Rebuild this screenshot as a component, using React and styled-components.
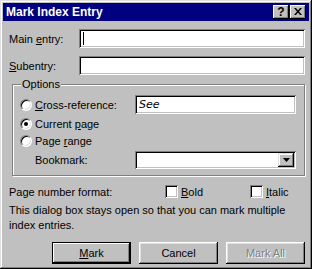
import React from "react";
import styled, { createGlobalStyle, css } from "styled-components";

const Global = createGlobalStyle`
  html, body { margin: 0; padding: 0; background: #c0c0c0; }
  body { font-family: "Liberation Sans", Arial, sans-serif; font-size: 11px; color: #000; }
  * { box-sizing: border-box; }
`;

const Window = styled.div`
  width: 312px;
  height: 269px;
  padding: 3px;
  background: #c0c0c0;
  box-shadow: inset -1px -1px #000, inset 1px 1px #dfdfdf, inset -2px -2px #808080, inset 2px 2px #fff;
  display: flex;
  flex-direction: column;
`;

const TitleBar = styled.div`
  height: 18px;
  background: #000080;
  display: flex;
  align-items: center;
  padding: 0 3px 0 3px;
`;

const Title = styled.div`
  flex: 1;
  color: #fff;
  font-weight: bold;
  font-size: 12px;
`;

const CapButtons = styled.div`
  display: flex;
  gap: 1px;
`;

const CapButton = styled.div`
  width: 16px;
  height: 14px;
  background: #c0c0c0;
  box-shadow: inset -1px -1px #000, inset 1px 1px #fff, inset -2px -2px #808080;
  display: flex;
  align-items: center;
  justify-content: center;
  font-weight: bold;
  font-size: 12px;
  line-height: 1;
  padding-bottom: 1px;
`;

const Content = styled.div`
  flex: 1;
  display: flex;
  flex-direction: column;
  padding: 8px 4px 0 6px;
`;

const Row = styled.div`
  display: flex;
  align-items: center;
  height: 19px;
  margin-top: ${(p) => p.$mt || 0}px;
`;

const Label = styled.div`
  width: 70px;
  flex: none;
  white-space: nowrap;
`;

const sunken = css`
  background: #fff;
  box-shadow: inset 1px 1px #808080, inset -1px -1px #fff, inset 2px 2px #000, inset -2px -2px #c0c0c0;
`;

const Input = styled.div`
  ${sunken};
  height: 19px;
  flex: 1;
  display: flex;
  align-items: center;
  padding: 0 4px;
  font-style: ${(p) => (p.$italic ? "italic" : "normal")};
  font-family: ${(p) => (p.$italic ? '"DejaVu Sans", sans-serif' : "inherit")};
`;

const Caret = styled.div`
  width: 1px;
  height: 13px;
  background: #000;
`;

const Group = styled.fieldset`
  margin: 3px 0 0 3px;
  padding: 0 8px 6px 7px;
  border: 1px solid #808080;
  box-shadow: inset 1px 1px #fff, 1px 1px #fff;
  min-width: 0;
`;

const Legend = styled.legend`
  padding: 0 1px;
  margin-left: 1px;
  background: #c0c0c0;
  line-height: 13px;
`;

const OptGrid = styled.div`
  display: grid;
  grid-template-columns: 115px 161px;
  grid-template-rows: 19px 14px 14px 18px;
  row-gap: 3px;
  align-items: center;
  margin-top: 4px;
`;

const Radio = styled.div`
  display: flex;
  align-items: center;
  gap: 3px;
  grid-column: ${(p) => (p.$span ? "1 / 3" : "auto")};
`;

const RadioCircle = styled.span`
  width: 12px;
  height: 12px;
  border-radius: 50%;
  background: #fff;
  border: 1px solid;
  border-color: #808080 #fff #fff #808080;
  box-shadow: inset 1px 1px #000, inset -1px -1px #dfdfdf;
  display: flex;
  align-items: center;
  justify-content: center;
  flex: none;
`;

const Dot = styled.span`
  width: 4px;
  height: 4px;
  border-radius: 50%;
  background: #000;
`;

const Indent = styled.div`
  padding-left: 15px;
`;

const Combo = styled.div`
  ${sunken};
  height: 18px;
  display: flex;
  justify-content: flex-end;
  padding: 2px;
`;

const DropBtn = styled.div`
  width: 16px;
  height: 14px;
  background: #c0c0c0;
  box-shadow: inset -1px -1px #000, inset 1px 1px #dfdfdf, inset -2px -2px #808080, inset 2px 2px #fff;
  display: flex;
  align-items: center;
  justify-content: center;
`;

const CheckRow = styled.div`
  display: grid;
  grid-template-columns: 156px 85px 1fr;
  align-items: center;
  height: 13px;
  margin-top: 9px;
`;

const Check = styled.div`
  display: flex;
  align-items: center;
  gap: 3px;
`;

const Box = styled.span`
  ${sunken};
  width: 13px;
  height: 13px;
  flex: none;
`;

const Info = styled.div`
  margin-top: 5px;
  line-height: 15px;
  padding-right: 10px;
`;

const Buttons = styled.div`
  display: flex;
  justify-content: flex-end;
  gap: 8px;
  margin-top: 9px;
`;

const Button = styled.div`
  width: 79px;
  height: 22px;
  background: #c0c0c0;
  display: flex;
  align-items: center;
  justify-content: center;
  box-shadow: ${(p) =>
    p.$default
      ? "inset 0 0 0 1px #000, inset -2px -2px #000, inset 2px 2px #fff, inset -3px -3px #808080"
      : "inset -1px -1px #000, inset 1px 1px #fff, inset -2px -2px #808080, inset 2px 2px #dfdfdf"};
  color: ${(p) => (p.$disabled ? "#808080" : "#000")};
  text-shadow: ${(p) => (p.$disabled ? "1px 1px #fff" : "none")};
`;

export default function App() {
  return (
    <>
      <Global />
      <Window>
        <TitleBar>
          <Title>Mark Index Entry</Title>
          <CapButtons>
            <CapButton>?</CapButton>
            <CapButton>
              <svg width="8" height="7" viewBox="0 0 8 7">
                <path d="M0 0h2l2 2.5L6 0h2L5 3.5 8 7H6L4 4.5 2 7H0l3-3.5z" fill="#000" />
              </svg>
            </CapButton>
          </CapButtons>
        </TitleBar>
        <Content>
          <Row>
            <Label>Main <u>e</u>ntry:</Label>
            <Input>
              <Caret />
            </Input>
          </Row>
          <Row $mt={8}>
            <Label><u>S</u>ubentry:</Label>
            <Input />
          </Row>
          <Group>
            <Legend>Options</Legend>
            <OptGrid>
              <Radio>
                <RadioCircle />
                <span><u>C</u>ross-reference:</span>
              </Radio>
              <Input $italic>See</Input>
              <Radio $span>
                <RadioCircle>
                  <Dot />
                </RadioCircle>
                <span>Current <u>p</u>age</span>
              </Radio>
              <Radio $span>
                <RadioCircle />
                <span>Page <u>r</u>ange</span>
              </Radio>
              <Indent>Bookmark:</Indent>
              <Combo>
                <DropBtn>
                  <svg width="7" height="4" viewBox="0 0 7 4">
                    <path d="M0 0h7L3.5 4z" fill="#000" />
                  </svg>
                </DropBtn>
              </Combo>
            </OptGrid>
          </Group>
          <CheckRow>
            <span>Page number format:</span>
            <Check>
              <Box />
              <span><u>B</u>old</span>
            </Check>
            <Check>
              <Box />
              <span><u>I</u>talic</span>
            </Check>
          </CheckRow>
          <Info>This dialog box stays open so that you can mark multiple index entries.</Info>
          <Buttons>
            <Button $default><span><u>M</u>ark</span></Button>
            <Button>Cancel</Button>
            <Button $disabled>Mark All</Button>
          </Buttons>
        </Content>
      </Window>
    </>
  );
}
